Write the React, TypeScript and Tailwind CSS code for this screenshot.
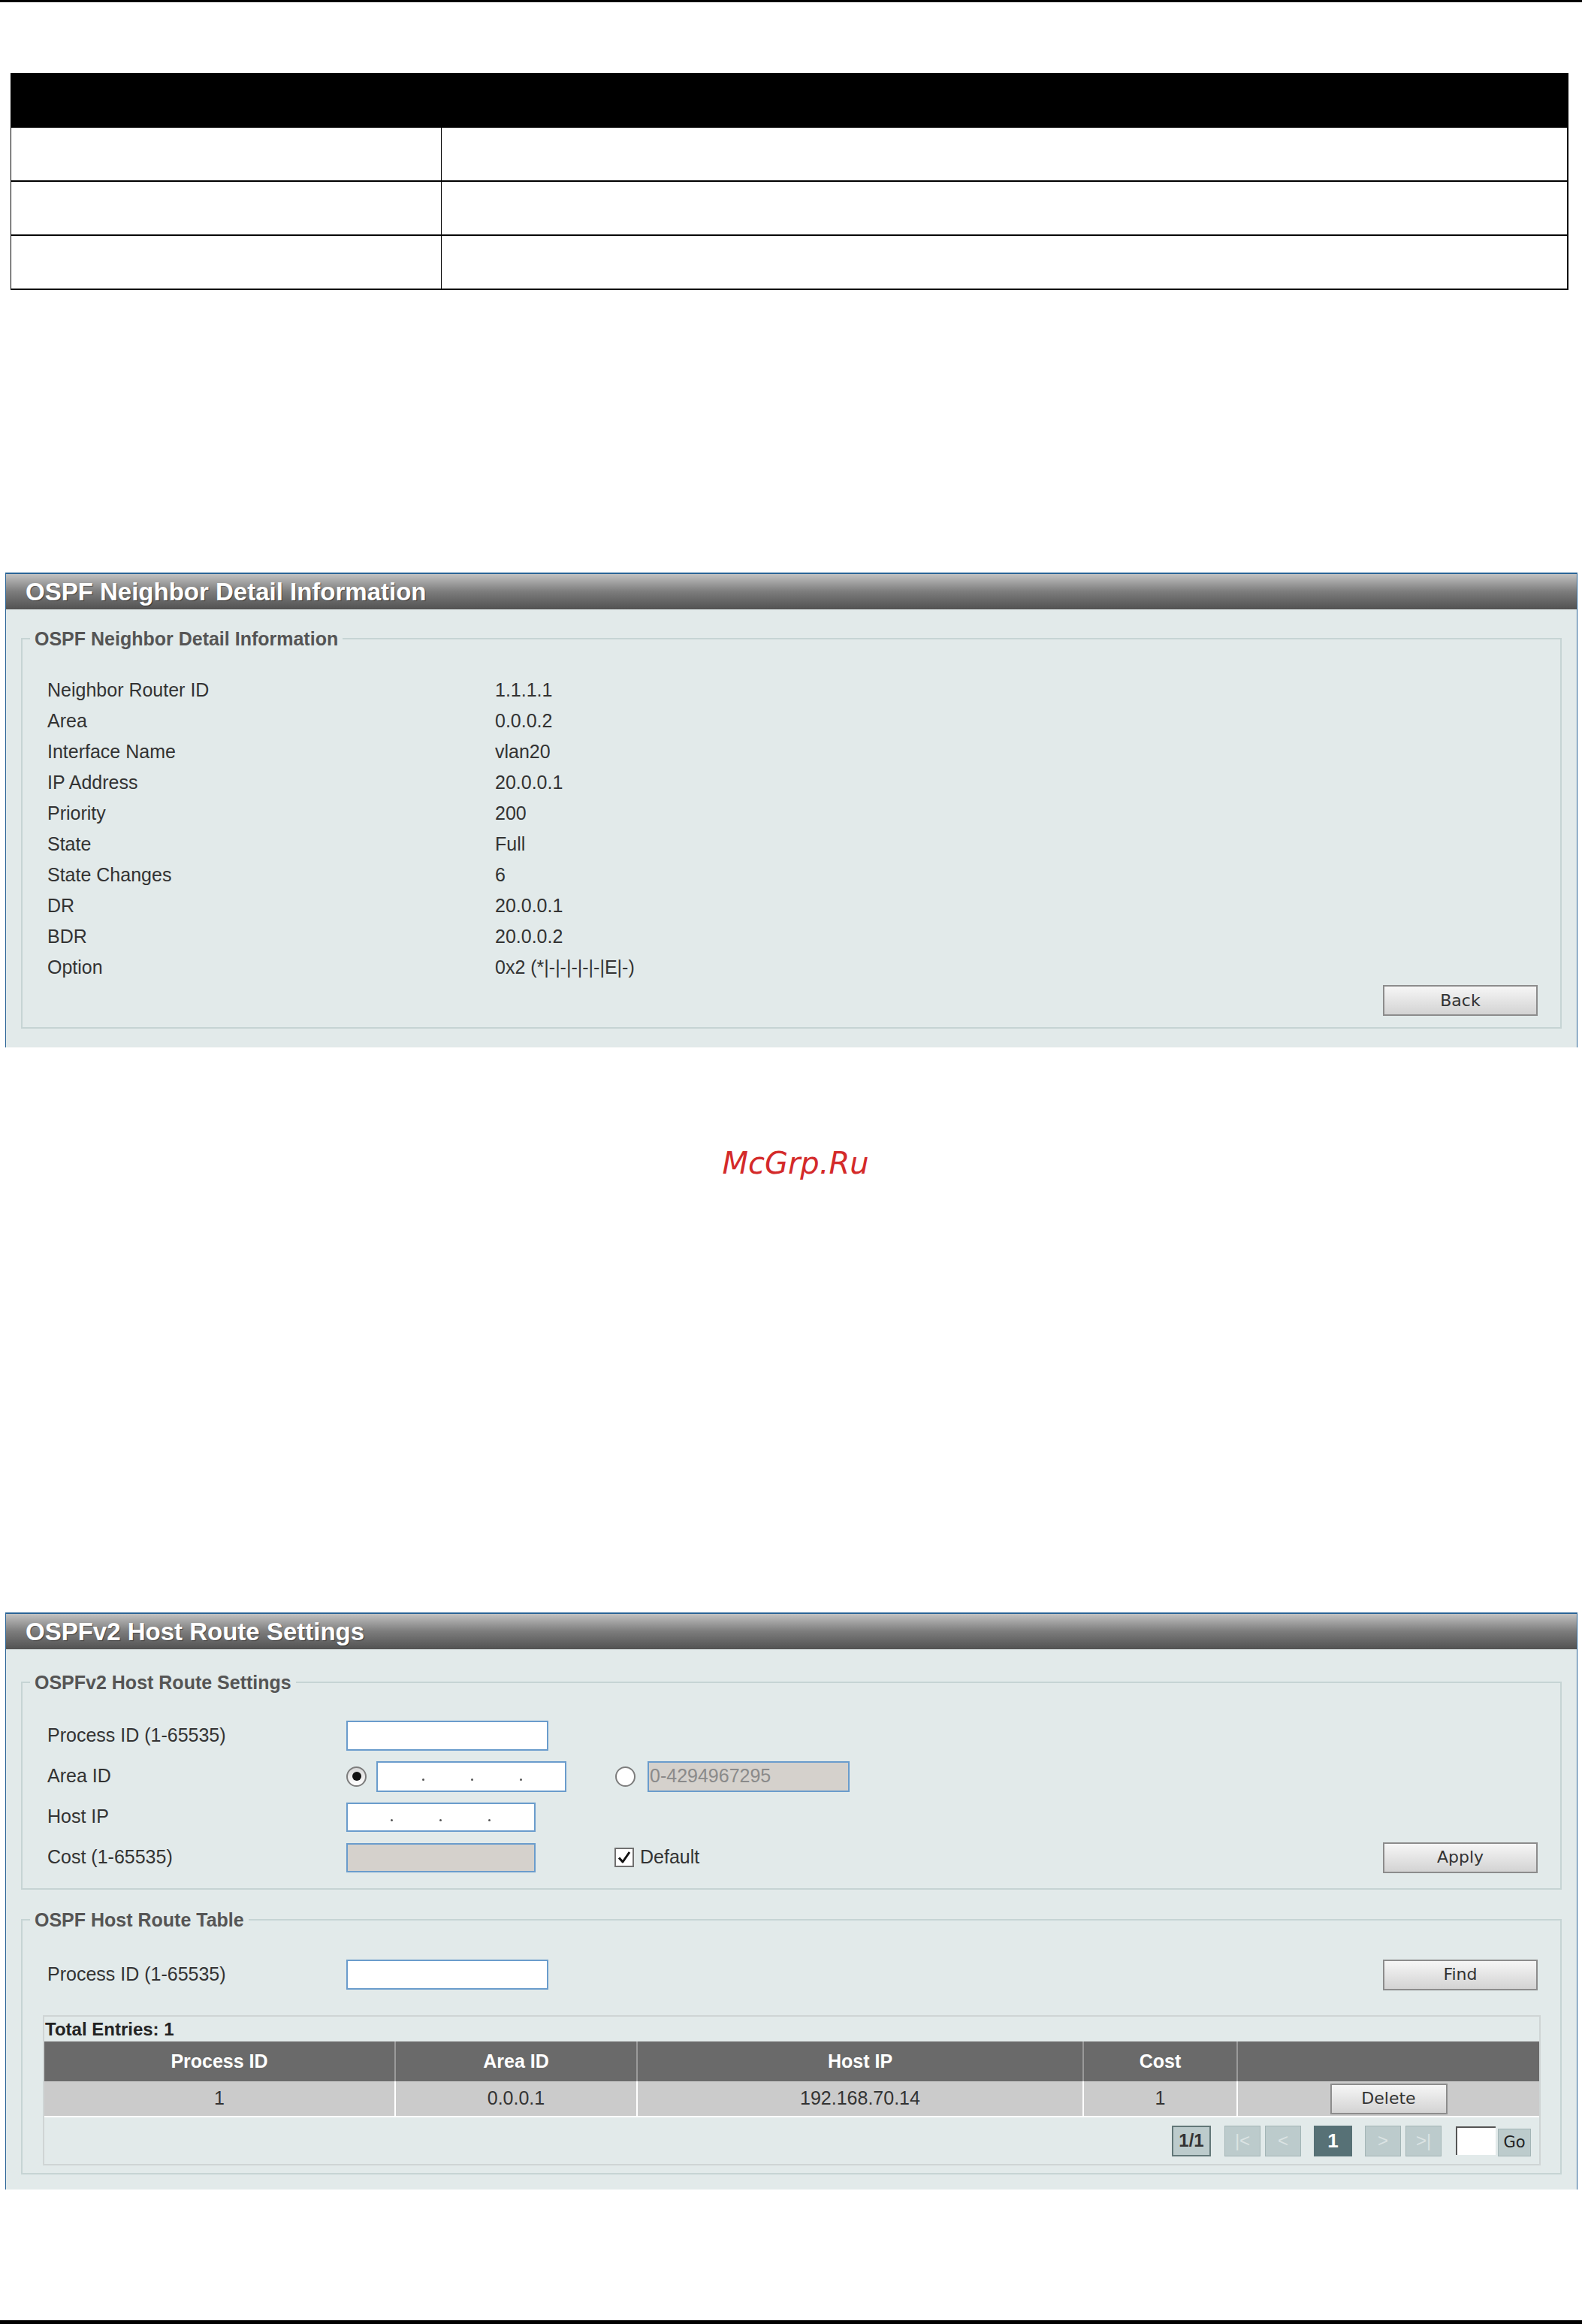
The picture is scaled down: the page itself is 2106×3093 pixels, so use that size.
import React from 'react'

const sans = "font-['Liberation_Sans',Arial,sans-serif]"
const btnFont = "font-['DejaVu_Sans',Verdana,sans-serif]"

function Panel({ title, top, bodyTop, children }: { title: string; top: string; bodyTop: string; children: React.ReactNode }) {
  return (
    <div className={`${top} ml-[7px] w-[2093px] border-x border-[#2a6496]`}>
      <div className="flex h-[49px] items-center border-t-2 border-[#2a6496] bg-linear-to-b from-[#c2c2c2] via-[#7c7c7c] to-[#525252] pl-[26px]">
        <span className="text-[33px] font-bold leading-none text-white [text-shadow:1px_1px_1px_rgba(0,0,0,0.45)]">{title}</span>
      </div>
      <div className={`${bodyTop} bg-[#e2eaea] px-[20px] pb-[20px]`}>{children}</div>
    </div>
  )
}

function Legend({ children }: { children: React.ReactNode }) {
  return (
    <legend className="-ml-[23px] px-[6px] text-[25px] font-bold leading-[30px] text-[#555]">{children}</legend>
  )
}

function Button({ label, w = 'w-[206px]' }: { label: string; w?: string }) {
  return (
    <button
      className={`${w} ${btnFont} h-[41px] border-2 border-[#8c8c8c] bg-linear-to-b from-[#f6f6f6] to-[#d3d3d3] text-[22px] leading-none text-[#333]`}
    >
      {label}
    </button>
  )
}

function Dots({ pad }: { pad: string }) {
  return (
    <div className={`flex h-full items-center pt-[8px] ${pad}`}>
      <span className="h-[3px] w-[3px] rounded-full bg-[#555]" />
      <span className="ml-[62px] h-[3px] w-[3px] rounded-full bg-[#555]" />
      <span className="ml-[62px] h-[3px] w-[3px] rounded-full bg-[#555]" />
    </div>
  )
}

function Radio({ checked }: { checked?: boolean }) {
  return (
    <span
      className={`flex h-[27px] w-[27px] shrink-0 items-center justify-center rounded-full border-2 border-[#7d7d7d] ${
        checked ? 'bg-linear-to-b from-[#d8d8d8] to-[#ffffff]' : 'bg-white'
      }`}
    >
      {checked && <span className="h-[12px] w-[12px] rounded-full bg-[#111]" />}
    </span>
  )
}

const detail: [string, string][] = [
  ['Neighbor Router ID', '1.1.1.1'],
  ['Area', '0.0.0.2'],
  ['Interface Name', 'vlan20'],
  ['IP Address', '20.0.0.1'],
  ['Priority', '200'],
  ['State', 'Full'],
  ['State Changes', '6'],
  ['DR', '20.0.0.1'],
  ['BDR', '20.0.0.2'],
  ['Option', '0x2 (*|-|-|-|-|-|E|-)'],
]

const pageBtn = 'flex h-[41px] items-center justify-center border border-[#a3b5b6] bg-[#bccbcc] text-[24px] font-bold text-[#dbe3e3]'

export default function App() {
  return (
    <div className={`${sans} relative flex h-[3093px] w-[2106px] flex-col bg-white text-[25px] text-[#333]`}>
      <div className="h-[3px] bg-black" />

      {/* empty parameter table */}
      <div className="ml-[14px] mt-[94px] w-[2074px]">
        <div className="h-[73px] bg-black" />
        {[0, 1, 2].map((i) => (
          <div key={i} className="flex h-[72px] border-b-2 border-l border-r-2 border-black">
            <div className="w-[573px] border-r border-black" />
            <div className="flex-1" />
          </div>
        ))}
      </div>

      <Panel title="OSPF Neighbor Detail Information" top="mt-[376px]" bodyTop="pt-[24px] pb-[25px]">
        <fieldset className="border-2 border-[#c6d4d4] pb-[15px] pl-[33px] pr-[30px] pt-[33px]">
          <Legend>OSPF Neighbor Detail Information</Legend>
          {detail.map(([k, v]) => (
            <div key={k} className="flex h-[41px] items-center leading-[41px]">
              <span className="w-[596px]">{k}</span>
              <span>{v}</span>
            </div>
          ))}
          <div className="mt-[3px] flex justify-end">
            <Button label="Back" />
          </div>
        </fieldset>
      </Panel>

      <div className="mt-[130px] h-[48px] pl-[12px] text-center font-['DejaVu_Sans',sans-serif] text-[40px] italic leading-[48px] text-[#d42a2a]">
        McGrp.Ru
      </div>

      <Panel title="OSPFv2 Host Route Settings" top="mt-[574px]" bodyTop="pt-[29px]">
        <fieldset className="border-2 border-[#c6d4d4] pb-[14px] pl-[33px] pr-[30px] pt-[29px]">
          <Legend>OSPFv2 Host Route Settings</Legend>
          <div className="flex h-[54px] items-center">
            <span className="w-[398px]">Process ID (1-65535)</span>
            <div className="h-[40px] w-[269px] border-2 border-[#6a9ccc] bg-white" />
          </div>
          <div className="flex h-[54px] items-center">
            <span className="w-[398px]">Area ID</span>
            <Radio checked />
            <div className="ml-[13px] h-[41px] w-[253px] border-2 border-[#6a9ccc] bg-white">
              <Dots pad="pl-[59px]" />
            </div>
            <span className="ml-[65px]">
              <Radio />
            </span>
            <div className="ml-[16px] flex h-[41px] w-[269px] items-center border-2 border-[#6a9ccc] bg-[#d5d1cc] pl-[1px] text-[#8a8a8a]">
              0-4294967295
            </div>
          </div>
          <div className="flex h-[54px] items-center">
            <span className="w-[398px]">Host IP</span>
            <div className="h-[39px] w-[252px] border-2 border-[#6a9ccc] bg-white">
              <Dots pad="pl-[57px]" />
            </div>
          </div>
          <div className="flex h-[54px] items-center">
            <span className="w-[398px]">Cost (1-65535)</span>
            <div className="h-[39px] w-[252px] border-2 border-[#6a9ccc] bg-[#d5d1cc]" />
            <span className="ml-[105px] flex h-[26px] w-[26px] items-center justify-center border-2 border-[#707070] bg-white">
              <svg viewBox="0 0 20 20" className="h-[20px] w-[20px]">
                <path d="M3 10.5 L8 16 L17 3" fill="none" stroke="#111" strokeWidth="3" strokeLinejoin="round" />
              </svg>
            </span>
            <span className="ml-[8px]">Default</span>
            <div className="ml-auto">
              <Button label="Apply" />
            </div>
          </div>
        </fieldset>

        <fieldset className="mt-[25px] border-2 border-[#c6d4d4] pb-[10px] pl-[33px] pr-[30px] pt-[31px]">
          <Legend>OSPF Host Route Table</Legend>
          <div className="flex h-[54px] items-center">
            <span className="w-[398px]">Process ID (1-65535)</span>
            <div className="h-[40px] w-[269px] border-2 border-[#6a9ccc] bg-white" />
            <div className="ml-auto">
              <Button label="Find" />
            </div>
          </div>

          <div className="-ml-[6px] -mr-[4px] mt-[27px] border-2 border-[#cfd5d5]">
            <div className="flex h-[33px] items-center pl-[1px] text-[24px] font-bold text-[#222]">Total Entries: 1</div>
            <div className="flex h-[53px] bg-[#6a6a6a] text-[25px] font-bold text-white">
              <div className="flex w-[468px] items-center justify-center border-r-2 border-[#9a9a9a]">Process ID</div>
              <div className="flex w-[322px] items-center justify-center border-r-2 border-[#9a9a9a]">Area ID</div>
              <div className="flex w-[594px] items-center justify-center border-r-2 border-[#9a9a9a]">Host IP</div>
              <div className="flex w-[205px] items-center justify-center border-r-2 border-[#9a9a9a]">Cost</div>
              <div className="flex-1" />
            </div>
            <div className="flex h-[48px] border-b-2 border-white bg-[#cbcbcb]">
              <div className="flex w-[468px] items-center justify-center border-r-2 border-white">1</div>
              <div className="flex w-[322px] items-center justify-center border-r-2 border-white">0.0.0.1</div>
              <div className="flex w-[594px] items-center justify-center border-r-2 border-white">192.168.70.14</div>
              <div className="flex w-[205px] items-center justify-center border-r-2 border-white">1</div>
              <div className="flex flex-1 items-center justify-center">
                <Button label="Delete" w="w-[156px]" />
              </div>
            </div>
            <div className="flex h-[62px] items-center justify-end pr-[11px]">
              <div className="flex h-[41px] w-[52px] items-center justify-center border-2 border-[#627778] bg-[#bccbcc] text-[24px] font-bold text-[#333]">
                1/1
              </div>
              <div className={`${pageBtn} ml-[18px] w-[48px] font-normal`}>|&lt;</div>
              <div className={`${pageBtn} ml-[6px] w-[48px] font-normal`}>&lt;</div>
              <div className="ml-[17px] flex h-[41px] w-[51px] items-center justify-center bg-[#577176] text-[26px] font-bold text-white">
                1
              </div>
              <div className={`${pageBtn} ml-[17px] w-[48px] font-normal`}>&gt;</div>
              <div className={`${pageBtn} ml-[6px] w-[48px] font-normal`}>&gt;|</div>
              <div className="ml-[19px] h-[38px] w-[53px] border-l-2 border-t-2 border-[#555] bg-white" />
              <div
                className={`${btnFont} ml-[3px] mt-[4px] flex h-[37px] w-[44px] items-end justify-center border border-[#a3b5b6] bg-[#bccbcc] pb-[1px] text-[21px] text-[#222]`}
              >
                Go
              </div>
            </div>
          </div>
        </fieldset>
      </Panel>

      <div className="mt-auto h-[5px] bg-black" />
    </div>
  )
}
